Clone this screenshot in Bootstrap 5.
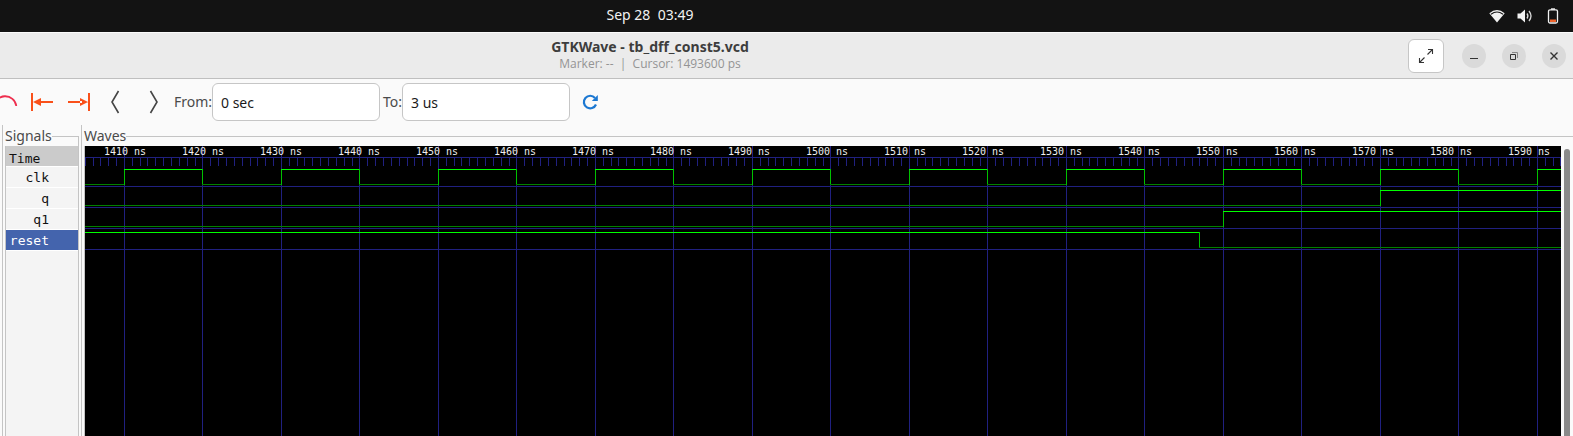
<!DOCTYPE html>
<html lang="en">
<head>
<meta charset="utf-8">
<meta name="viewport" content="width=device-width, initial-scale=1">
<title>GTKWave - tb_dff_const5.vcd</title>
<link href="https://cdn.jsdelivr.net/npm/bootstrap@5.3.0/dist/css/bootstrap.min.css" rel="stylesheet">
<style>
  body { font-family: "Noto Sans", "Open Sans", sans-serif; font-size: 14px; line-height: 20px; background: #fafafa; color: #4a4a4a; }
  .topbar { height: 32px; background: #131313; color: #f2f2f2; line-height: 30px; }
  .clock { white-space: pre; height: 32px; }
  .titlebar { height: 47px; background: #ebebeb; border-top: 1px solid #fbfbfb; border-bottom: 1px solid #bfbfbf; }
  .mid-block { width: 1300px; min-width: 0; flex-shrink: 1; }
  .win-title { font-size: 14px; line-height: 16px; font-weight: 700; color: #3d3d3d; }
  .win-sub { font-family: "Open Sans", sans-serif; font-size: 12px; line-height: 18px; color: #949494; white-space: pre; }
  .status-area { padding-right: 14px; }
  .gap-volume { margin-right: 12px; }
  .expand-btn { width: 36px; height: 34px; background: #fff; border: 1px solid #c6c6c6; border-radius: 6px; margin-right: 18px; }
  .round-btn { width: 24px; height: 24px; background: #dadada; border-radius: 50%; margin-right: 16px; }
  .round-btn:last-child { margin-right: 7px; }
  .toolbar { height: 46px; }
  .tool-btn { width: 36px; height: 36px; border: 0; }
  .tool-edge { width: 24px; }
  .tool-wide { width: 38px; }
  .tool-reload { width: 40px; }
  .lbl-from { width: 40px; }
  .lbl-to { width: 22px; }
  .time-field { width: 168px; height: 38px; padding: 0 8px; border: 1px solid #c6c6c6; border-radius: 6px; background: #fff; color: #1a1a1a; font-size: 14px; }
  .panes { margin-left: 2px; border-left: 1px solid #c4c4c4; }
  .signal-pane { width: 74px; margin: 0 2px; }
  .wave-pane { border-left: 1px solid #c4c4c4; padding-left: 2px; }
  .frame-head { height: 21px; line-height: 21px; }
  .frame-head::after { content: ""; flex: 1; height: 10px; border-top: 1px solid #c4c4c4; align-self: flex-end; }
  .signal-pane .frame-head::after { border-right: 1px solid #c4c4c4; }
  .signal-list { border: solid #c4c4c4; border-width: 0 1px; background: #f4f4f4; font: 13px/21px "DejaVu Sans Mono", monospace; color: #111; }
  .signal-row { height: 21px; border-bottom: 1px solid #fff; padding-right: 29px; text-align: right; line-height: 21px; }
  .signal-time { background: #cbcbcb; text-align: left; padding: 2px 0 0 3px; }
  .signal-on { background: #4464ad; color: #fff; }
  .wave-area { background: #000; border-left: 1px solid #c4c4c4; }
  .wave-area svg text { font: 10px "DejaVu Sans Mono", monospace; fill: #f0f0f0; }
  .scroller { width: 12px; padding: 3px 3px 0; }
  .scroll-thumb { background: #8a8a8a; border-radius: 3px 3px 0 0; }
</style>
</head>
<body class="vh-100 d-flex flex-column overflow-hidden">
<div class="topbar d-flex align-items-center flex-shrink-0">
  <div class="mid-block clock text-center">Sep 28  03:49</div>
  <div class="status-area d-flex align-items-center ms-auto flex-shrink-0">
    <svg class="me-2" width="20" height="16" viewBox="0 0 20 16" aria-label="Wi-Fi"><path d="M2.300 5.200Q10 -1 17.700 5.200L10 14.500Z" fill="#f2f2f2"/><path d="M4 6.300Q10 1.800 16 6.300" fill="none" stroke="#131313" stroke-width="1.100"/></svg>
    <svg class="gap-volume" width="20" height="16" viewBox="0 0 20 16" aria-label="Volume"><path d="M2.500 5.500h3L10 1.500v13L5.500 10.500h-3z" fill="#f2f2f2"/><path d="M12 5.500q1.800 2.500 0 5M14 3q4 5 0 10" fill="none" stroke="#d8d8d8" stroke-width="1.300"/></svg>
    <svg width="12" height="16" viewBox="0 0 12 16" aria-label="Battery low"><path d="M4 .3h4v1.500H4z" fill="#f2f2f2"/><rect x="1.500" y="1.800" width="9" height="13.200" rx="1.500" fill="none" stroke="#f2f2f2" stroke-width="1.300"/><path d="M3 11.500h6v2.500H3z" fill="#f0642d"/></svg>
  </div>
</div>
<header class="titlebar d-flex align-items-center flex-shrink-0">
  <div class="mid-block text-center">
    <div class="win-title">GTKWave - tb_dff_const5.vcd</div>
    <div class="win-sub">Marker: --  |  Cursor: 1493600 ps</div>
  </div>
  <div class="d-flex align-items-center ms-auto flex-shrink-0">
    <button class="btn expand-btn p-0 d-flex align-items-center justify-content-center" aria-label="Full screen"><svg width="16" height="16" viewBox="0 0 16 16" fill="none" stroke="#333" stroke-width="1.100"><path d="M10 1.500h4.500V6M14.500 1.500L9.500 6.500M6 14.500H1.500V10M1.500 14.500L6.500 9.500"/></svg></button>
    <button class="btn round-btn p-0 border-0 d-flex align-items-center justify-content-center" aria-label="Minimize"><svg width="16" height="16" viewBox="0 0 16 16"><path d="M4 10h8v1H4z" fill="#333"/></svg></button>
    <button class="btn round-btn p-0 border-0 d-flex align-items-center justify-content-center" aria-label="Restore"><svg width="16" height="16" viewBox="0 0 16 16" fill="none"><path d="M6 4.500h5.500V10" stroke="#888"/><path d="M4.500 6.500h5v5h-5z" stroke="#333"/></svg></button>
    <button class="btn round-btn p-0 border-0 d-flex align-items-center justify-content-center" aria-label="Close"><svg width="16" height="16" viewBox="0 0 16 16"><path d="M4.500 4.500l7 7M11.500 4.500l-7 7" stroke="#333" stroke-width="1.400"/></svg></button>
  </div>
</header>
<div class="toolbar d-flex align-items-center flex-shrink-0" role="toolbar">
  <button class="btn tool-btn tool-edge p-0 d-flex align-items-center" aria-label="Undo zoom"><svg width="24" height="24" viewBox="0 0 24 24"><path d="M-6 17A11.200 11.200 0 0 1 16.300 16" fill="none" stroke="#ee2e4e" stroke-width="1.800"/></svg></button>
  <button class="btn tool-btn p-0 d-flex align-items-center justify-content-center" aria-label="To start"><svg width="24" height="24" viewBox="0 0 24 24" fill="#f9501a"><path d="M1 3h2v18H1zM9 11h14v2H9zM3 12l8-4v8z"/></svg></button>
  <button class="btn tool-btn p-0 d-flex align-items-center justify-content-center" aria-label="To end"><svg width="24" height="24" viewBox="0 0 24 24" fill="#f9501a"><path d="M22 3h2v18h-2zM2 11h14v2H2zM22 12l-8-4v8z"/></svg></button>
  <button class="btn tool-btn tool-wide p-0 d-flex align-items-center justify-content-center" aria-label="Previous edge"><svg width="24" height="24" viewBox="0 0 24 24"><path d="M15.500 1L9 12l6.500 11" fill="none" stroke="#444" stroke-width="1.600"/></svg></button>
  <button class="btn tool-btn tool-wide p-0 d-flex align-items-center justify-content-center" aria-label="Next edge"><svg width="24" height="24" viewBox="0 0 24 24"><path d="M9.500 1L16 12L9.500 23" fill="none" stroke="#444" stroke-width="1.600"/></svg></button>
  <label class="lbl-from text-end" for="from">From:</label>
  <input class="time-field" id="from" type="text" value="0 sec">
  <label class="lbl-to text-end" for="to">To:</label>
  <input class="time-field" id="to" type="text" value="3 us">
  <button class="btn tool-btn tool-reload p-0 d-flex align-items-center justify-content-center" aria-label="Reload"><svg width="18" height="18" viewBox="0 0 18 18"><path d="M14 5A6.300 6.300 0 1 0 15 11.500" fill="none" stroke="#1c78d2" stroke-width="2.200"/><path d="M16.800 2V8h-6z" fill="#1c78d2"/></svg></button>
</div>
<main class="panes d-flex flex-grow-1">
  <section class="signal-pane d-flex flex-column flex-shrink-0">
    <div class="frame-head d-flex">Signals</div>
    <div class="signal-list flex-grow-1">
      <div class="signal-row signal-time">Time</div>
      <div class="signal-row">clk</div>
      <div class="signal-row">q</div>
      <div class="signal-row">q1</div>
      <div class="signal-row signal-on">reset</div>
    </div>
  </section>
  <section class="wave-pane d-flex flex-column flex-grow-1 overflow-hidden">
    <div class="frame-head d-flex">Waves</div>
    <div class="d-flex flex-grow-1">
      <div class="wave-area flex-grow-1 overflow-hidden position-relative">
        <svg id="waves" class="position-absolute top-0 start-0" width="100%" height="100%" shape-rendering="crispEdges" role="img" aria-label="Signal waveforms"></svg>
      </div>
      <div class="scroller d-flex"><div class="scroll-thumb w-100 flex-grow-1"></div></div>
    </div>
  </section>
</main>
<script src="https://cdn.jsdelivr.net/npm/bootstrap@5.3.0/dist/js/bootstrap.bundle.min.js"></script>
<script>
  // Draws the time ruler, the grid and the four traces across the pane's width.
  const START = 1410, STEP = 78.5, GRID = '#202080';
  const waves = document.getElementById('waves');
  const xAt = ns => Math.round(38.9 + (ns - START) * STEP / 10);

  function draw() {
    const width = waves.parentElement.clientWidth;
    const end = START + Math.ceil(width / STEP) * 10;
    const parts = [];
    const bar = (x, y, w, h, c) => parts.push(`<rect x="${x}" y="${y}" width="${w}" height="${h}" fill="${c}"/>`);
    bar(0, 11, '100%', 1, GRID);
    for (let ns = START - 5; ns <= end; ns++) bar(xAt(ns), 11, 1, 9, GRID);
    for (let ns = START; ns <= end; ns += 10) bar(xAt(ns), 0, 1, '100%', GRID);
    for (let row = 1; row <= 4; row++) bar(0, 19 + row * 21, '100%', 1, GRID);
    const trace = (row, level, edges) => {
      const hi = row * 21 + 2, lo = hi + 15;
      let x = 0;
      [...edges.filter(t => t < end), end].forEach(t => {
        const nx = xAt(t);
        bar(x, level ? hi : lo, nx - x, 1, level ? '#00ff00' : '#008000');
        if (t !== end) bar(nx, hi, 1, 16, '#00c000');
        x = nx;
        level = !level;
      });
    };
    const clock = [];
    for (let ns = START; ns < end; ns += 10) clock.push(ns);
    trace(1, false, clock);
    trace(2, false, [1570]);
    trace(3, false, [1550]);
    trace(4, true, [1547]);
    for (let k = 0; 19 + 78 * k + 43 < width; k++) parts.push(`<text x="${19 + 78 * k}" y="9">${START + 10 * k} ns</text>`);
    waves.innerHTML = parts.join('');
  }
  draw();
  window.addEventListener('resize', draw);
</script>
</body>
</html>
